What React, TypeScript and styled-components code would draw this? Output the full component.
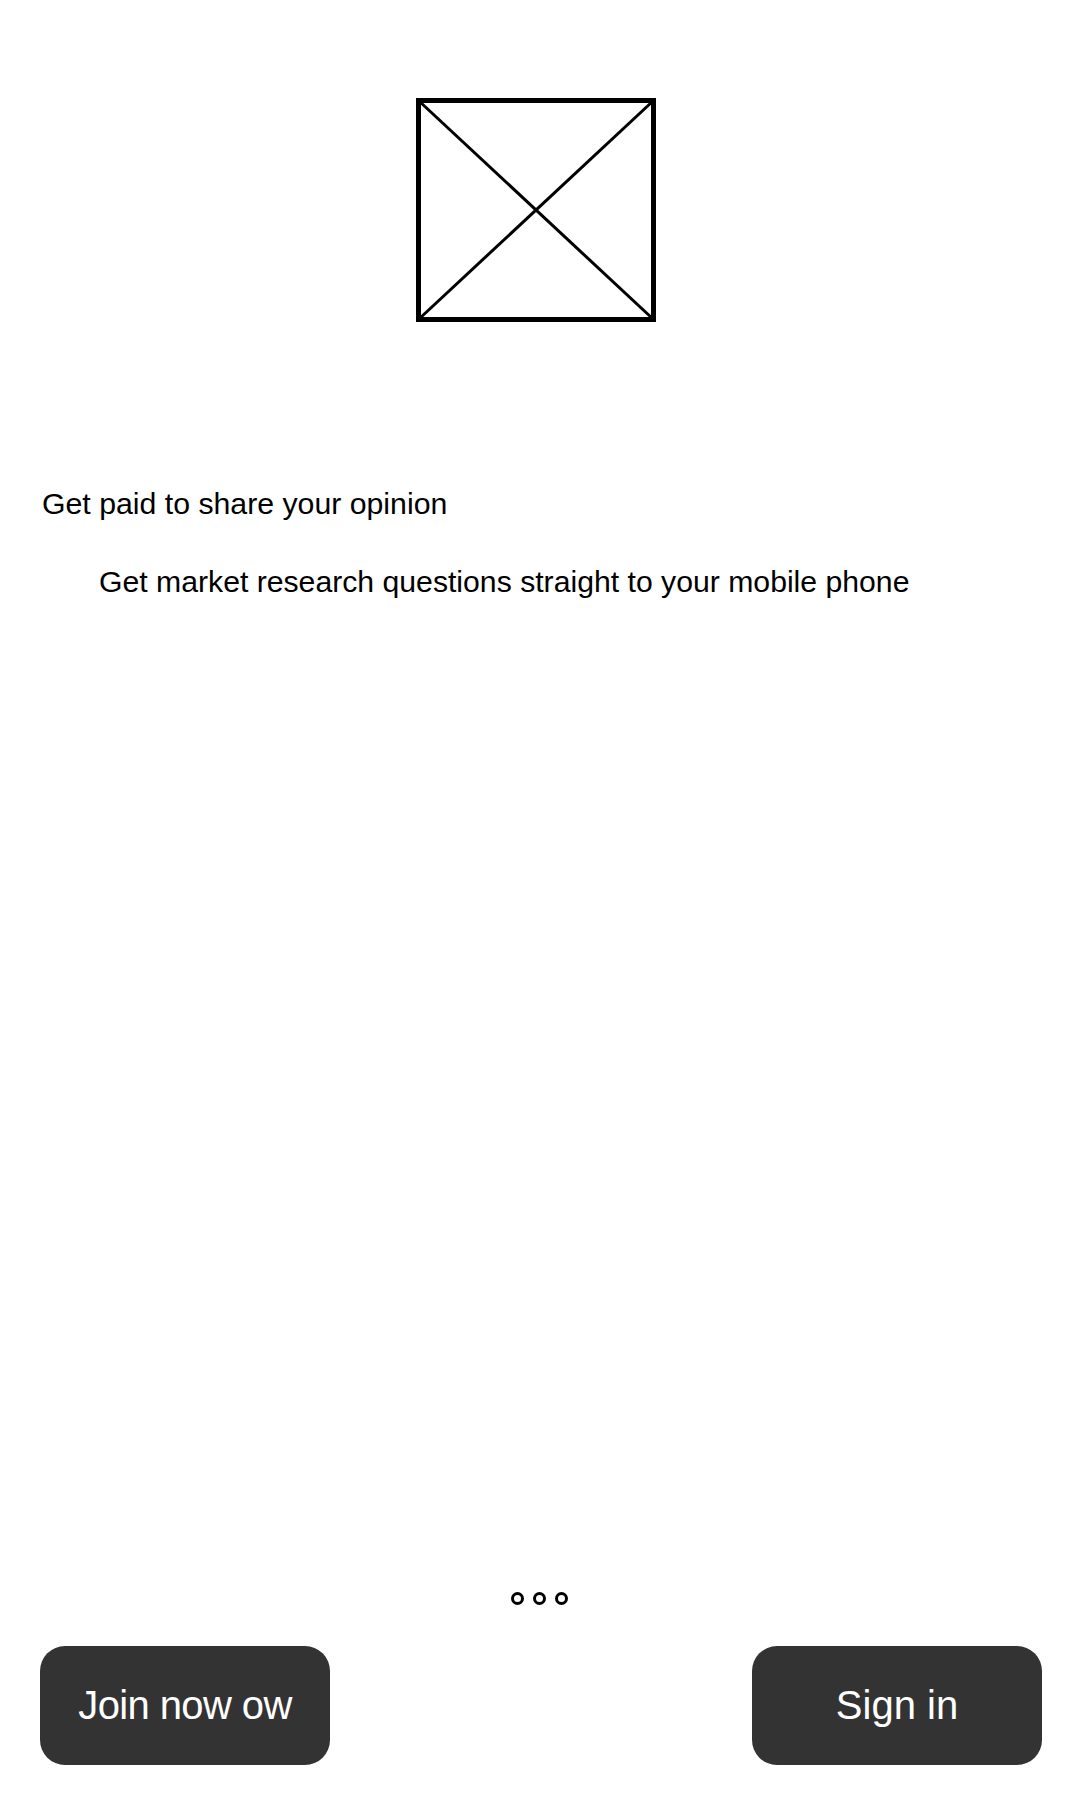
import React from "react";
import styled, { createGlobalStyle } from "styled-components";

const GlobalStyle = createGlobalStyle`
  *, *::before, *::after { box-sizing: border-box; }
  html, body { margin: 0; padding: 0; background: #ffffff; }
  body { font-family: "Liberation Sans", Arial, sans-serif; color: #000; }
`;

const Page = styled.div`
  min-height: 1800px;
  width: 1080px;
  display: flex;
  flex-direction: column;
  padding: 98px 0 35px 0;
`;

const HeroRow = styled.div`
  display: flex;
  justify-content: center;
  padding-right: 8px;
`;

const Title = styled.h1`
  margin: 165px 0 0 0;
  padding-left: 42px;
  font-size: 30.25px;
  font-weight: 400;
  line-height: 34px;
`;

const Subtitle = styled.p`
  margin: 44px 0 0 0;
  padding-left: 99px;
  font-size: 30.2px;
  line-height: 34px;
`;

const Spacer = styled.div`
  flex: 1;
`;

const Dots = styled.div`
  display: flex;
  justify-content: center;
  gap: 9px;
  padding-right: 2px;
  margin-bottom: 41px;
`;

const Dot = styled.span`
  width: 13px;
  height: 13px;
  border: 3px solid #000;
  border-radius: 50%;
`;

const ButtonRow = styled.div`
  display: flex;
  justify-content: space-between;
  padding: 0 38px 0 40px;
`;

const ActionButton = styled.button<{ $tight?: boolean }>`
  width: 290px;
  height: 119px;
  border: none;
  border-radius: 25px;
  background: #333333;
  color: #ffffff;
  font-family: "Liberation Sans", Arial, sans-serif;
  font-size: 40px;
  letter-spacing: ${(p) => (p.$tight ? "-0.6px" : "0")};
  display: flex;
  align-items: center;
  justify-content: center;
  padding: 0;
`;

const Placeholder = () => (
  <svg width="240" height="224" viewBox="0 0 240 224">
    <rect x="2.5" y="2.5" width="235" height="219" fill="none" stroke="#000" strokeWidth="5" />
    <line x1="3" y1="3" x2="237" y2="221" stroke="#000" strokeWidth="3" />
    <line x1="237" y1="3" x2="3" y2="221" stroke="#000" strokeWidth="3" />
  </svg>
);

export default function App() {
  return (
    <>
      <GlobalStyle />
      <Page>
        <HeroRow>
          <Placeholder />
        </HeroRow>
        <Title>Get paid to share your opinion</Title>
        <Subtitle>Get market research questions straight to your mobile phone</Subtitle>
        <Spacer />
        <Dots>
          <Dot />
          <Dot />
          <Dot />
        </Dots>
        <ButtonRow>
          <ActionButton $tight>Join now ow</ActionButton>
          <ActionButton>Sign in</ActionButton>
        </ButtonRow>
      </Page>
    </>
  );
}
